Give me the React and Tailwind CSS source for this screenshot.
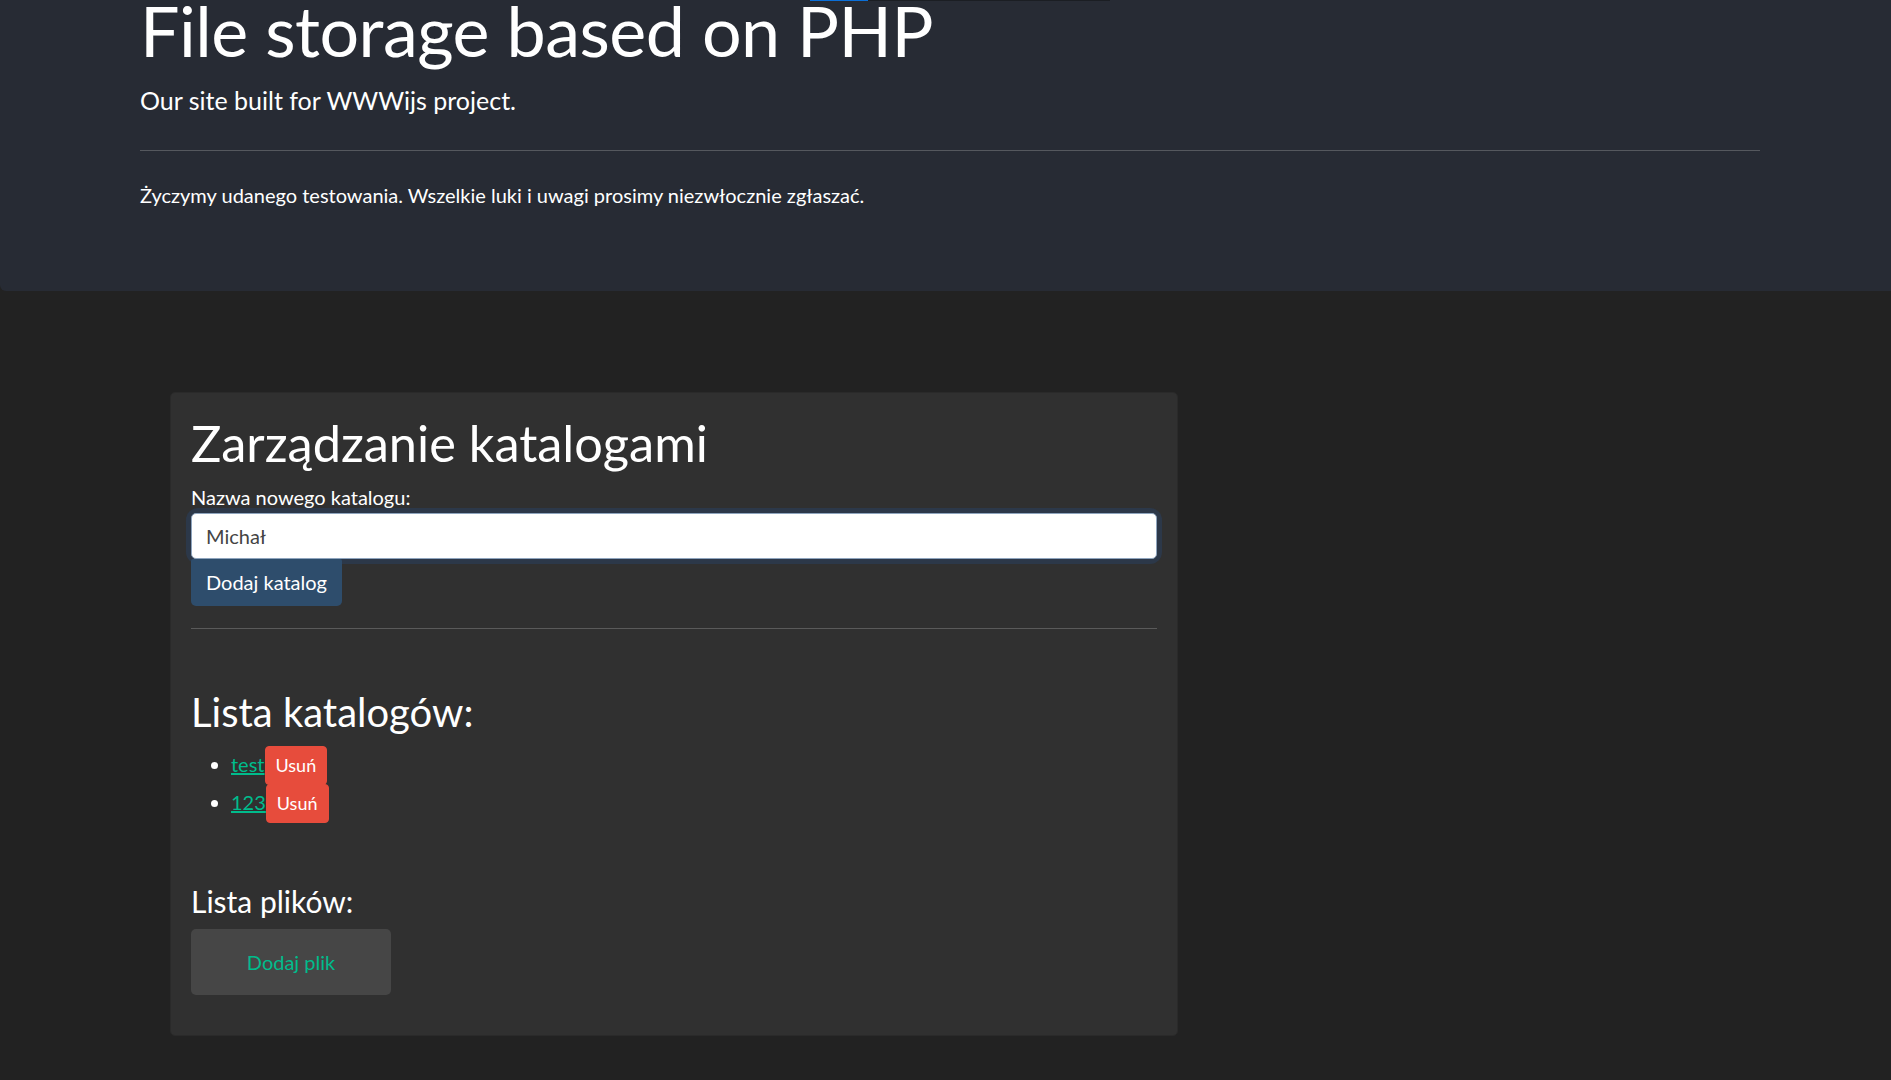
export default function App() {
  const font = { fontFamily: 'Lato, "Noto Sans", "Liberation Sans", sans-serif' };
  return (
    <div className="min-h-[1080px] w-full bg-[#222222] text-white overflow-hidden relative" style={font}>
      <header className="flow-root bg-[#272b34] h-[291px] rounded-bl-[6px] pl-[140px] pr-[131px]">
        <h1 className="text-[70px] font-normal leading-[1.2] mt-[-12px] tracking-[-0.5px]">File storage based on PHP</h1>
        <p className="text-[25px] leading-[1.5] mt-[10px]">Our site built for WWWijs project.</p>
        <hr className="mt-[30px] border-0 h-[1px] bg-[#55585e]" />
        <p className="text-[20px] leading-[1.5] mt-[29px]">Życzymy udanego testowania. Wszelkie luki i uwagi prosimy niezwłocznie zgłaszać.</p>
      </header>
      <div className="absolute top-0 left-[810px] w-[58px] h-[1px] bg-[#0b6fd8]" />
      <div className="absolute top-0 left-[868px] w-[242px] h-[1px] bg-[#1b1e23]" />
      <main className="pt-[101px] pl-[170px]">
        <section className="w-[1008px] bg-[#303030] rounded-[5px] p-[20px] border border-[#2a2a2a]">
          <h2 className="text-[50.5px] leading-[1.2] font-normal">Zarządzanie katalogami</h2>
          <label className="block text-[20px] leading-[1.5] mt-[8px]">Nazwa nowego katalogu:</label>
          <div className="mt-[1px] rounded-[7px] shadow-[0_0_0_5px_#2c3849]">
            <input
              className="block w-full h-[46px] bg-white rounded-[5px] border border-[#8ea4bd] px-[14px] text-[20px] text-[#444] outline-none"
              style={font}
              defaultValue="Michał"
            />
          </div>
          <button className="block h-[47px] px-[15px] bg-[#2e4d6c] text-white text-[20px] rounded-b-[5px] rounded-t-[2px] relative">
            Dodaj katalog
          </button>
          <hr className="mt-[22px] border-0 h-[1px] bg-[#5a5a5a]" />
          <h3 className="text-[40px] leading-[1.2] mt-[59px]">Lista katalogów:</h3>
          <ul className="list-disc pl-[40px] mt-[10px] text-[20px]">
            {['test', '123'].map((n) => (
              <li key={n} className="h-[38px]">
                <span className="inline-flex items-baseline">
                  <a href="#" className="text-[#00bc8c] underline leading-[1.5]">{n}</a>
                  <button className="bg-[#e74c3c] text-white text-[18px] leading-[1.5] px-[10px] py-[5px] rounded-[4px] border border-[#e74c3c]">Usuń</button>
                </span>
              </li>
            ))}
          </ul>
          <h4 className="text-[30px] leading-[1.2] mt-[61px]">Lista plików:</h4>
          <button className="block mt-[10px] mb-[20px] w-[200px] h-[66px] bg-[#464646] rounded-[5px] text-[#00bc8c] text-[20px]">
            Dodaj plik
          </button>
        </section>
      </main>
    </div>
  );
}
